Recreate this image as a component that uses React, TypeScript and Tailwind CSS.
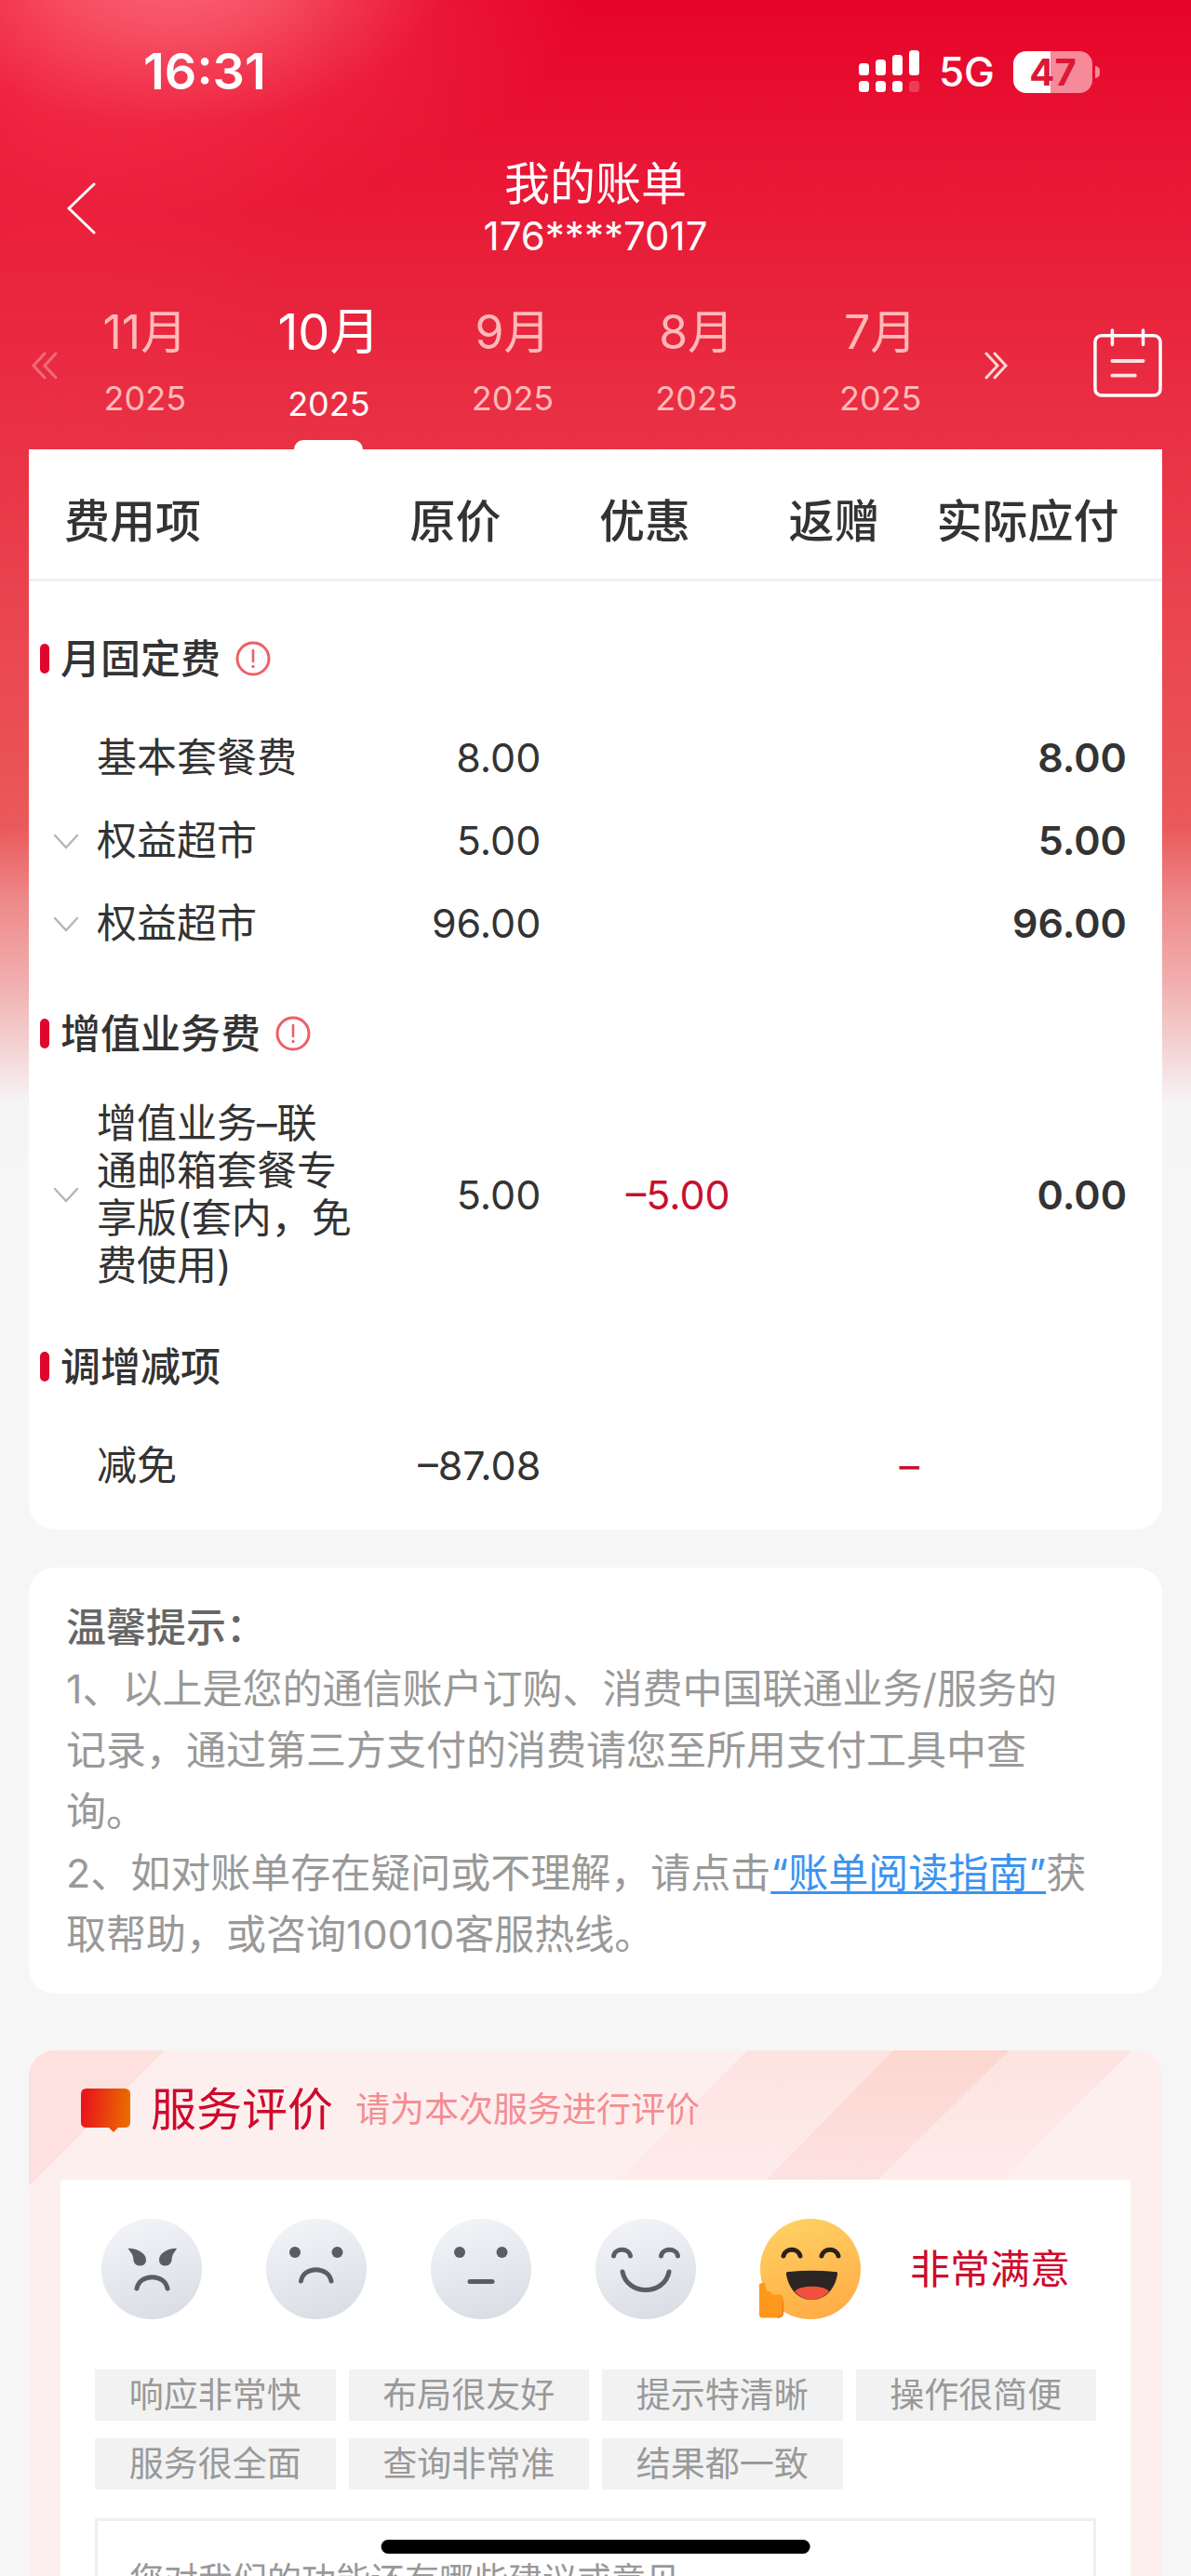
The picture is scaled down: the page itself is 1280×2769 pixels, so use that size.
import React, { useState } from 'react';

type Item = { name: string; price: string; discount?: string; gift?: string; total?: string; expandable?: boolean };
type Section = { title: string; info?: boolean; items: Item[] };

const months = [
  { month: '11月', year: '2025' },
  { month: '10月', year: '2025' },
  { month: '9月', year: '2025' },
  { month: '8月', year: '2025' },
  { month: '7月', year: '2025' },
];

const sections: Section[] = [
  {
    title: '月固定费',
    info: true,
    items: [
      { name: '基本套餐费', price: '8.00', total: '8.00' },
      { name: '权益超市', price: '5.00', total: '5.00', expandable: true },
      { name: '权益超市', price: '96.00', total: '96.00', expandable: true },
    ],
  },
  {
    title: '增值业务费',
    info: true,
    items: [
      { name: '增值业务–联通邮箱套餐专享版(套内，免费使用)', price: '5.00', discount: '–5.00', total: '0.00', expandable: true },
    ],
  },
  {
    title: '调增减项',
    items: [{ name: '减免', price: '–87.08', gift: '–' }],
  },
];

const tags = ['响应非常快', '布局很友好', '提示特清晰', '操作很简便', '服务很全面', '查询非常准', '结果都一致'];

const faces = ['非常不满意', '不满意', '一般', '满意', '非常满意'];

function StatusBar() {
  return (
    <div className="flex items-center justify-between pt-[50px] pr-[98px] pl-[154px] text-white">
      <div className="text-[54px] leading-[54px] font-semibold">16:31</div>
      <div className="flex items-center">
        <svg className="h-[46px] w-[66px]" viewBox="0 0 66 46" fill="#fff">
          <rect x="0" y="14" width="11" height="13" rx="3.5" />
          <rect x="18" y="10" width="11" height="17" rx="3.5" />
          <rect x="36" y="5" width="11" height="22" rx="3.5" />
          <rect x="54" y="0" width="11" height="27" rx="3.5" />
          <rect x="0" y="33" width="11" height="12" rx="3.5" />
          <rect x="18" y="33" width="11" height="12" rx="3.5" />
          <rect x="36" y="33" width="11" height="12" rx="3.5" />
          <rect x="54" y="33" width="11" height="12" rx="3.5" opacity="0.2" />
        </svg>
        <span className="ml-5 text-[44px] leading-[54px] font-medium">5G</span>
        <div className="ml-5 flex h-[45px] w-[85px] items-center justify-center rounded-[14px] bg-[linear-gradient(90deg,#fff_47%,#f78a98_47%)] text-[40px] leading-[45px] font-bold text-[#dc1737]">
          47
        </div>
        <div className="ml-[3px] h-[13px] w-[5px] rounded-r-full bg-[#f78a98]" />
      </div>
    </div>
  );
}

function NavBar() {
  return (
    <header className="mt-[66px] grid grid-cols-[1fr_auto_1fr] items-center text-white">
      <button aria-label="返回" className="mb-1 ml-[71px] justify-self-start">
        <svg className="h-14 w-8" viewBox="0 0 32 56" fill="none" stroke="#fff" strokeWidth="3" strokeLinecap="round" strokeLinejoin="round">
          <path d="M30 2 L3 28 L30 54" />
        </svg>
      </button>
      <div className="text-center">
        <h1 className="text-[49px] leading-14">我的账单</h1>
        <p className="text-[42px] leading-14">176****7017</p>
      </div>
    </header>
  );
}

function MonthTabs({ active, onChange }: { active: number; onChange: (i: number) => void }) {
  return (
    <nav className="flex h-[201px] items-center px-[31px] text-white">
      <button aria-label="更晚月份" className="mt-5 w-[26px]">
        <svg className="h-[30px] w-[34px] max-w-none opacity-30" viewBox="0 0 34 30" fill="none" stroke="#fff" strokeWidth="3" strokeLinecap="round">
          <path d="M17 2 L5 15 L17 28 M29 2 L17 15 L29 28" />
        </svg>
      </button>
      <div className="grid h-full flex-1 grid-cols-5">
        {months.map((m, i) => (
          <button
            key={m.month}
            onClick={() => onChange(i)}
            className={`flex flex-col items-center pt-[42px] ${i === active ? 'text-white' : 'text-[#ffb9b9]'}`}
          >
            <span className={i === active ? 'text-[54px] leading-[66px]' : 'text-[50px] leading-[66px]'}>{m.month}</span>
            <span className={`text-[36px] leading-11 ${i === active ? 'mt-[22px]' : 'mt-4'}`}>{m.year}</span>
            {i === active && <span className="mt-auto h-[10px] w-[74px] rounded-t-[10px] bg-white" />}
          </button>
        ))}
      </div>
      <button aria-label="更早月份" className="mt-5 ml-[11px]">
        <svg className="h-[30px] w-7" viewBox="0 0 28 30" fill="none" stroke="#ffd9d3" strokeWidth="3" strokeLinecap="round">
          <path d="M4 2 L16 15 L4 28 M13 2 L25 15 L13 28" />
        </svg>
      </button>
      <button aria-label="选择月份" className="mt-[14px] ml-[91px]">
        <svg className="h-[74px] w-[74px]" viewBox="0 0 76 76" fill="none" stroke="#fff" strokeWidth="3.6" strokeLinecap="round">
          <rect x="2" y="8" width="72" height="66" rx="7" />
          <path d="M21 2 V18 M55 2 V18" />
          <path d="M21 36 H55 M21 52 H46" stroke="#ffe3e0" strokeWidth="4" />
        </svg>
      </button>
    </nav>
  );
}

function InfoIcon() {
  return (
    <svg className="h-[38px] w-[38px]" viewBox="0 0 38 38" fill="none" stroke="#ee5f66" strokeWidth="3" strokeLinecap="round">
      <circle cx="19" cy="19" r="17" />
      <path d="M19 10 V22" strokeWidth="2.6" />
      <circle cx="19" cy="27.5" r="1.2" fill="#ee5f66" strokeWidth="1" />
    </svg>
  );
}

function BillTable() {
  return (
    <section className="mx-[31px] rounded-b-[28px] bg-white pb-6">
      <table className="w-full table-fixed text-[#333]">
        <colgroup>
          <col />
          <col className="w-[16.7%]" />
          <col className="w-[16.7%]" />
          <col className="w-[16.7%]" />
          <col className="w-[20.6%]" />
        </colgroup>
        <thead>
          <tr className="h-[140px] border-b-[3px] border-[#f0f0f0] text-[49px] leading-[60px]">
            <th className="pt-[18px] pl-[38px] text-left font-medium">费用项</th>
            <th className="pt-[18px] font-medium">原价</th>
            <th className="pt-[18px] font-medium">优惠</th>
            <th className="pt-[18px] font-medium">返赠</th>
            <th className="pt-[18px] pr-[38px] font-medium whitespace-nowrap">实际应付</th>
          </tr>
        </thead>
        {sections.map((s, si) => (
          <tbody key={s.title} className="text-[43px] leading-[51px]">
            <tr className={si === 0 ? 'h-[147px]' : 'h-[136px]'}>
              <th colSpan={5} className={`pl-3 text-left font-medium ${si === 0 ? 'pt-[22px]' : 'pt-3'}`}>
                <div className="flex items-center">
                  <span className="h-8 w-[10px] rounded-full bg-[#e1062c]" />
                  <span className="ml-3">{s.title}</span>
                  {s.info && (
                    <button aria-label={`${s.title}说明`} className="ml-4">
                      <InfoIcon />
                    </button>
                  )}
                </div>
              </th>
            </tr>
            {s.items.map((item, i) => (
              <tr key={i} className="h-[89px]">
                <td className="py-[9px] pr-[6px] pl-[26px]">
                  <div className="flex items-center">
                    <span className="flex w-[47px] shrink-0">
                      {item.expandable && (
                        <button aria-label="展开">
                          <svg className="h-5 w-7" viewBox="0 0 28 20" fill="none" stroke="#b5b5b5" strokeWidth="2.4" strokeLinecap="round">
                            <path d="M2 4 L14 17 L26 4" />
                          </svg>
                        </button>
                      )}
                    </span>
                    <span>{item.name}</span>
                  </div>
                </td>
                <td className="pr-[10px] text-right">{item.price}</td>
                <td className="pr-[10px] text-right text-[#c8102e]">{item.discount}</td>
                <td className="pr-[10px] text-right text-[#c8102e]">{item.gift}</td>
                <td className="pr-[38px] text-right font-semibold">{item.total}</td>
              </tr>
            ))}
          </tbody>
        ))}
      </table>
    </section>
  );
}

function Tips() {
  return (
    <section className="mx-[31px] mt-[41px] rounded-[28px] bg-white py-[31px] pr-[75px] pl-10 text-[43px] leading-[66px] text-[#999]">
      <h2 className="font-medium text-[#666]">温馨提示：</h2>
      <p>1、以上是您的通信账户订购、消费中国联通业务/服务的记录，通过第三方支付的消费请您至所用支付工具中查询。</p>
      <p>
        2、如对账单存在疑问或不理解，请点击
        <a href="#guide" className="text-[#3b93f0] underline decoration-[3px] underline-offset-4">“账单阅读指南”</a>
        获取帮助，或咨询10010客服热线。
      </p>
    </section>
  );
}

function Face({ index }: { index: number }) {
  const happy = index === 4;
  return (
    <svg className="h-[108px] w-[108px] overflow-visible" viewBox="0 0 108 108" fill="none" stroke={happy ? '#2b211c' : '#5a5d62'} strokeWidth="5" strokeLinecap="round">
      <defs>
        <linearGradient id={`face-${index}`} x1="0.35" y1="0" x2="0.65" y2="1">
          <stop offset="0" stopColor={happy ? '#ffd062' : '#f1f3f7'} />
          <stop offset="1" stopColor={happy ? '#ffac45' : '#dadee4'} />
        </linearGradient>
      </defs>
      <circle cx="54" cy="54" r="54" fill={`url(#face-${index})`} stroke="none" />
      {index === 0 && (
        <>
          <path
            d="M28.5 31.8 C36 31.5 48 36 48 44 C48 48.5 45 50.5 41.5 50.5 C36.5 50.5 34.5 47 34.3 43 C34 38 31 36 28.5 31.8 Z M81 31.8 C73.5 31.5 62 36 62 44 C62 48.5 65 50.5 68.5 50.5 C73.5 50.5 75.5 47 75.7 43 C76 38 79 36 81 31.8 Z"
            fill="#5a5d62"
            stroke="none"
          />
          <path d="M38 75 C41 58.5 68 58.5 71 75" />
        </>
      )}
      {index === 1 && (
        <>
          <circle cx="31" cy="36" r="6" fill="#5a5d62" stroke="none" />
          <circle cx="76.5" cy="36" r="6" fill="#5a5d62" stroke="none" />
          <path d="M37.5 67 C40 50.5 67 50.5 70 67" />
        </>
      )}
      {index === 2 && (
        <>
          <circle cx="31" cy="36" r="6" fill="#5a5d62" stroke="none" />
          <circle cx="76.5" cy="36" r="6" fill="#5a5d62" stroke="none" />
          <path d="M42 67.5 H66" />
        </>
      )}
      {index === 3 && (
        <>
          <path d="M19.5 40 C21 31 36 31 37.5 40 M70.5 40 C72 31 87 31 88.5 40" />
          <path d="M29 57 C34 83 74 83 79 57" />
        </>
      )}
      {happy && (
        <>
          <path d="M25 40 C27 31 41 31 43 40 M66 40 C68 31 82 31 84 40" />
          <path d="M28 60 C27.5 57.5 29 57 31 57 Q55 54.5 80 57 C82.5 57 83.5 57.5 83 60 C80 76 70 87 55.5 87 C41 87 31 76 28 60 Z" fill="#2b2523" stroke="none" />
          <path d="M37 78 C43 71 68 71 74 78 C69 84 62 87 55.5 87 C49 87 42 84 37 78 Z" fill="#f0503c" stroke="none" />
          <path d="M-1 70 L3 68.5 C6 69 6 72 6.5 78 H9 C12 78 12.5 80 12.5 81.5 H20 C24 81.5 25 84 25 87 V100 C25 104 23 106.5 19 106.5 H2 C0 106.5 -1 105 -1 103 Z" fill="#fd981c" stroke="none" />
          <path d="M24.5 90 V100 C24.5 104 22 106 19 106" stroke="#e87d1c" strokeWidth="1.5" />
        </>
      )}
    </svg>
  );
}

function Rating() {
  const [score, setScore] = useState(4);
  return (
    <section className="relative mx-[31px] mt-[61px] overflow-hidden rounded-t-[28px] bg-[#feefef] px-[34px]">
      <svg className="absolute top-0 left-0 h-[150px] w-full" viewBox="0 0 1218 150" preserveAspectRatio="none">
        <defs>
          <linearGradient id="stripe" x1="0" y1="0" x2="0" y2="1">
            <stop offset="0" stopColor="#fcd6cf" />
            <stop offset="1" stopColor="#fde3e3" />
          </linearGradient>
          <linearGradient id="stripe-soft" x1="0" y1="0" x2="0" y2="1">
            <stop offset="0" stopColor="#fde3e0" />
            <stop offset="1" stopColor="#feeceb" />
          </linearGradient>
        </defs>
        <path d="M0 0 H146 L0 146 Z" fill="#fde1df" />
        <path d="M772 0 H929 L782 150 H622 Z" fill="url(#stripe-soft)" />
        <path d="M929 0 H1054 L902 150 H782 Z" fill="url(#stripe)" />
        <path d="M1054 0 H1186 L1034 150 H902 Z" fill="url(#stripe-soft)" />
      </svg>
      <div className="relative flex h-[139px] items-center pb-3 pl-[22px]">
        <svg className="h-12 w-[53px]" viewBox="0 0 53 48">
          <defs>
            <linearGradient id="bubble" x1="0" y1="0" x2="1" y2="0.1">
              <stop offset="0.1" stopColor="#e7171c" />
              <stop offset="1" stopColor="#ea6a00" />
            </linearGradient>
          </defs>
          <path d="M6 1 H47 Q53 1 53 7 V37 Q53 43 47 43 H40 L35 48 L30 43 H6 Q0 43 0 37 V7 Q0 1 6 1 Z" fill="url(#bubble)" />
        </svg>
        <h2 className="ml-[22px] text-[49px] leading-[60px] text-[#cf0a2c]">服务评价</h2>
        <p className="ml-6 text-[37px] leading-[60px] text-[#f48d92]">请为本次服务进行评价</p>
      </div>
      <div className="relative bg-white px-[37px] pt-[42px] pb-10">
        <div className="flex items-center gap-[69px] pl-[7px]">
          {faces.map((f, i) => (
            <button key={f} aria-label={f} onClick={() => setScore(i)}>
              <Face index={i} />
            </button>
          ))}
          <span className="-ml-4 text-[43px] leading-[60px] whitespace-nowrap text-[#cf0a2c]">{faces[score]}</span>
        </div>
        <div className="mt-[54px] grid grid-cols-4 gap-x-[14px] gap-y-[19px]">
          {tags.map((t) => (
            <button key={t} className="h-[55px] bg-[#f2f2f2] text-[37px] leading-[55px] text-[#999]">
              {t}
            </button>
          ))}
        </div>
        <textarea
          aria-label="建议或意见"
          placeholder="您对我们的功能还有哪些建议或意见"
          className="mt-[31px] block h-60 w-full resize-none border-[3px] border-[#efefef] px-[34px] py-9 text-[37px] leading-[56px] placeholder:text-[#999]"
        />
      </div>
    </section>
  );
}

export default function App() {
  const [active, setActive] = useState(1);

  return (
    <div className="relative h-screen overflow-hidden bg-[#f6f6f7] bg-[radial-gradient(ellipse_450px_270px_at_190px_-40px,rgba(255,130,140,0.8),rgba(255,120,130,0.58)_30%,rgba(255,90,105,0.2)_65%,transparent),radial-gradient(ellipse_300px_460px_at_60px_60px,rgba(250,60,85,0.25),transparent),linear-gradient(180deg,#e60429_0px,#e91534_170px,#e8233c_320px,#e93446_500px,#ea4350_640px,#ea5255_820px,#ea5a5c_890px,#ee8a8a_970px,#f1aeae_1055px,#f4d2d2_1125px,#f6f4f5_1185px,#f6f6f7_1260px)] font-[Inter,'Noto_Sans_CJK_SC',sans-serif]">
      <StatusBar />
      <NavBar />
      <MonthTabs active={active} onChange={setActive} />
      <BillTable />
      <Tips />
      <Rating />
      <div className="fixed bottom-6 left-1/2 h-[15px] w-[36%] -translate-x-1/2 rounded-full bg-black" />
    </div>
  );
}
